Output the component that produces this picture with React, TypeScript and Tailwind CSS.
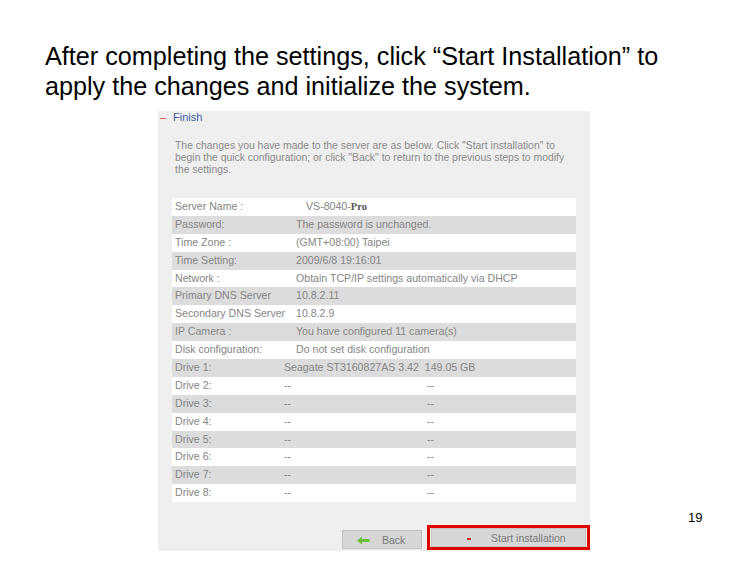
const rows: [string, React.ReactNode][] = [
  ["Server Name :", null],
  ["Password:", "The password is unchanged."],
  ["Time Zone :", "(GMT+08:00) Taipei"],
  ["Time Setting:", "2009/6/8 19:16:01"],
  ["Network :", "Obtain TCP/IP settings automatically via DHCP"],
  ["Primary DNS Server", "10.8.2.11"],
  ["Secondary DNS Server", "10.8.2.9"],
  ["IP Camera :", "You have configured 11 camera(s)"],
  ["Disk configuration:", "Do not set disk configuration"],
];

const drives: [string, string, string][] = [
  ["Drive 1:", "Seagate ST3160827AS 3.42\u00a0\u00a0149.05 GB", ""],
  ["Drive 2:", "--", "--"],
  ["Drive 3:", "--", "--"],
  ["Drive 4:", "--", "--"],
  ["Drive 5:", "--", "--"],
  ["Drive 6:", "--", "--"],
  ["Drive 7:", "--", "--"],
  ["Drive 8:", "--", "--"],
];

function BackArrow() {
  return (
    <svg width="13" height="9" viewBox="0 0 13 9">
      <path d="M0 4.5 L5 0.5 L5 3 L12.5 3 L12.5 6 L5 6 L5 8.5 Z" fill="#6cbf3a" />
    </svg>
  );
}

export default function App() {
  return (
    <div className="w-[748px] h-[561px] bg-white overflow-hidden font-['Liberation_Sans',Arial,sans-serif]">
      <div className="pt-[41px] pl-[45px] text-[25.2px] leading-[30px] text-black whitespace-nowrap">
        After completing the settings, click “Start Installation” to
        <br />
        apply the changes and initialize the system.
      </div>

      <div className="flex items-end mt-[10px]">
        <div className="ml-[158px] w-[432px] h-[440px] bg-[#efefef] flex flex-col">
          <div className="flex items-center h-[13px] text-[11px] leading-[13px]">
            <span className="ml-[2px] w-[13px] text-[#e0403a]">–</span>
            <span className="text-[#3d5da6]">Finish</span>
          </div>

          <p className="mt-[16px] ml-[17px] text-[10.4px] leading-[12px] text-[#8a8a8a] whitespace-nowrap">
            The changes you have made to the server are as below. Click "Start installation" to
            <br />
            begin the quick configuration; or click "Back" to return to the previous steps to modify
            <br />
            the settings.
          </p>

          <div className="mt-[22px] mx-[14px] text-[10.6px] text-[#858585] whitespace-nowrap">
            {rows.map(([label, value], i) => (
              <div
                key={label}
                className={`flex items-center h-[17.9px] ${i % 2 === 0 ? "bg-white" : "bg-[#dcdcdc]"}`}
              >
                <span className="pl-[3px] w-[124px] shrink-0">{label}</span>
                {value === null ? (
                  <span className="pl-[10px]">
                    VS-8040-<span className="font-['Liberation_Serif',serif] font-bold text-[#555]">Pro</span>
                  </span>
                ) : (
                  <span>{value}</span>
                )}
              </div>
            ))}
            {drives.map(([label, a, b], i) => (
              <div
                key={label}
                className={`flex items-center h-[17.9px] ${i % 2 === 0 ? "bg-[#dcdcdc]" : "bg-white"}`}
              >
                <span className="pl-[3px] w-[112px] shrink-0">{label}</span>
                <span className="w-[143px] shrink-0">{a}</span>
                <span>{b}</span>
              </div>
            ))}
          </div>

          <div className="mt-auto mb-[1px] flex items-end text-[10.5px] text-[#7a7a7a]">
            <div className="ml-[184px] mb-[1px] w-[80px] h-[19px] bg-[#d6d6d6] border border-[#c2c2c2] flex items-center pt-[2px]">
              <span className="ml-[14px] flex">
                <BackArrow />
              </span>
              <span className="ml-[12px]">Back</span>
            </div>
            <div className="ml-[5px] w-[163px] h-[25px] border-[3px] border-[#e00000] flex items-end justify-center">
              <div className="w-[155px] h-[19px] bg-[#d6d6d6] border border-[#c4c4c4] flex items-center pt-[2px]">
                <span className="ml-[35px] w-[4px] h-[2px] bg-[#e03030]" />
                <span className="ml-[20px]">Start installation</span>
              </div>
            </div>
          </div>
        </div>

        <div className="ml-[98px] mb-[26px] text-[13px] leading-[14px] text-black">19</div>
      </div>
    </div>
  );
}
